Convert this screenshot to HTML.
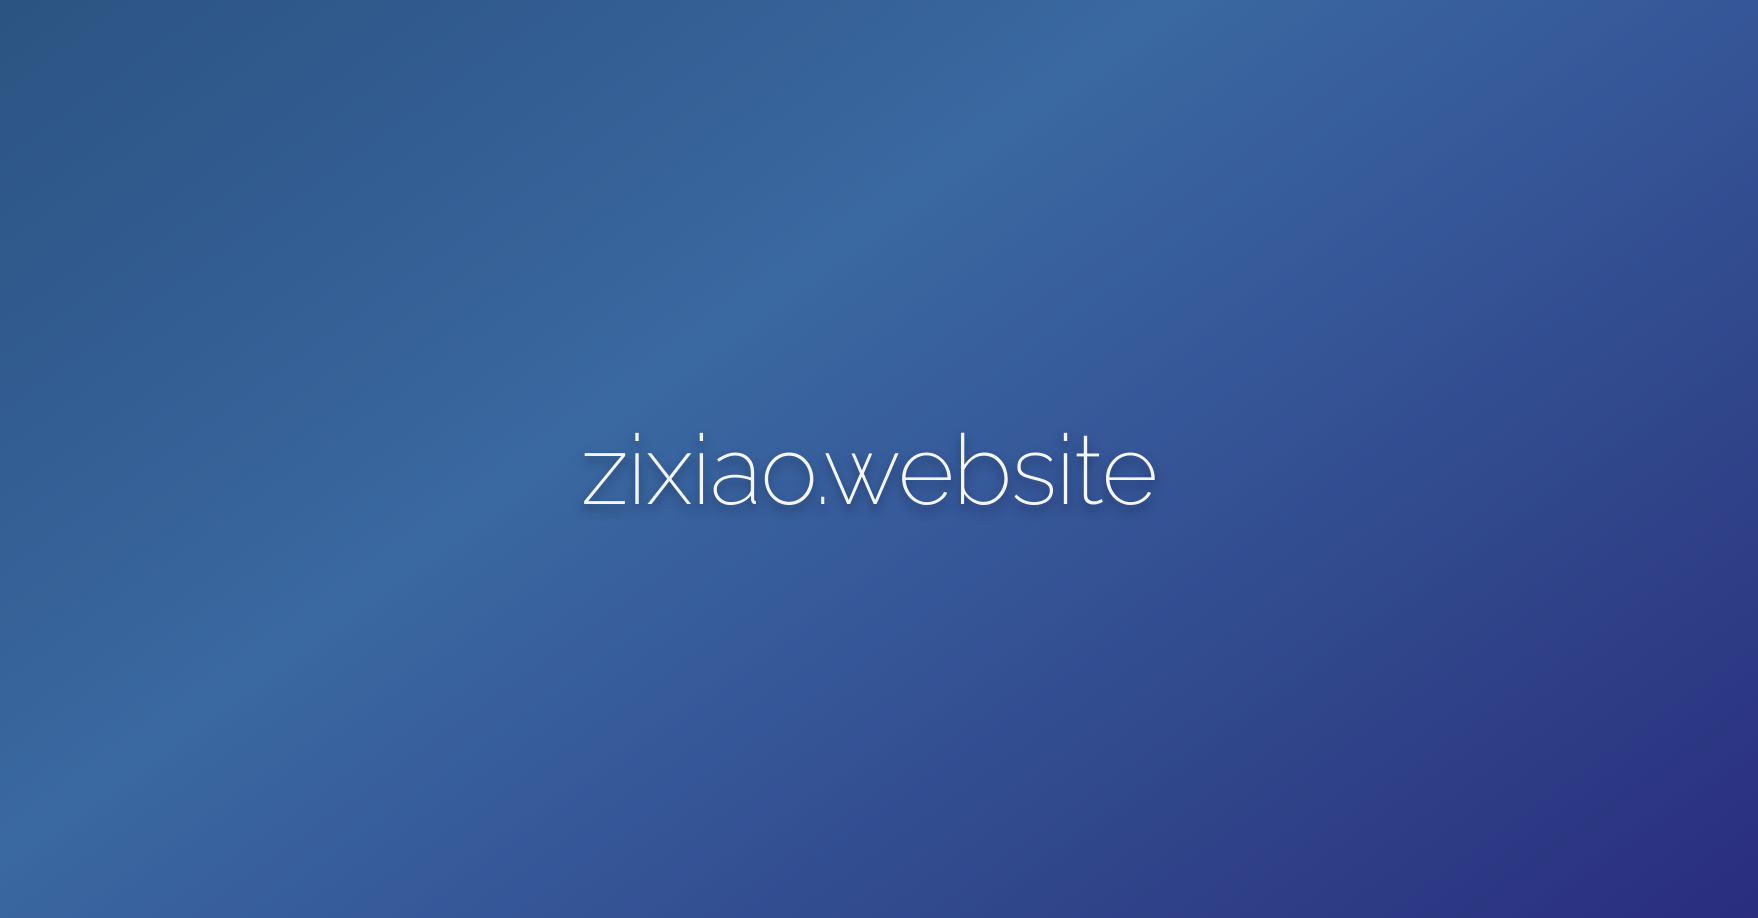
<!DOCTYPE html>
<html><head><meta charset="utf-8"><style>
html,body{margin:0;padding:0;width:1758px;height:918px;overflow:hidden}
body{background:linear-gradient(144deg,#2c5482 0%,#335e94 22%,#3a68a0 39%,#36599a 55%,#30468b 75%,#2a2d7d 100%);position:relative;font-family:"Raleway","Liberation Sans",sans-serif}
.t{position:absolute;left:-20px;right:0;top:422px;text-align:center;font-size:97px;font-weight:200;color:#f4f6fb;letter-spacing:-1px;text-shadow:0 6px 10px rgba(20,30,60,.55);line-height:1}
</style></head><body>
<div class="t">zixiao.website</div>
</body></html>
